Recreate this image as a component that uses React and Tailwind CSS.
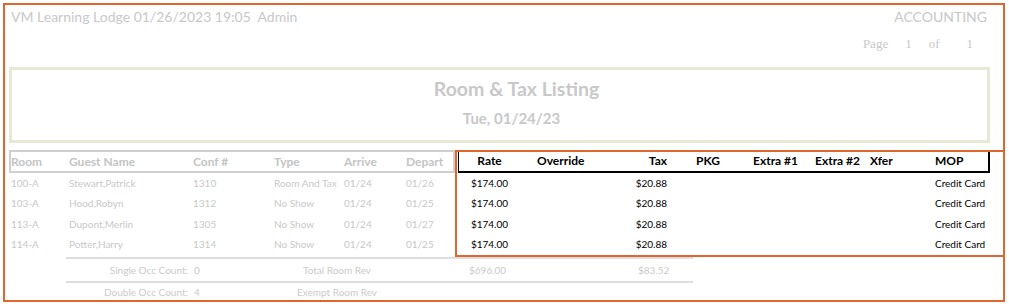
import React from "react";

const F = { fontFamily: "Lato, 'Open Sans', sans-serif" };

const rows = [
  ["100-A", "Stewart,Patrick", "1310", "Room And Tax", "01/24", "01/26"],
  ["103-A", "Hood,Robyn", "1312", "No Show", "01/24", "01/25"],
  ["113-A", "Dupont,Merlin", "1305", "No Show", "01/24", "01/27"],
  ["114-A", "Potter,Harry", "1314", "No Show", "01/24", "01/25"],
];

function LeftCols({ c }) {
  return (
    <>
      <div className="w-[58px] shrink-0">{c[0]}</div>
      <div className="w-[124px] shrink-0">{c[1]}</div>
      <div className="w-[81px] shrink-0">{c[2]}</div>
      <div className="w-[70px] shrink-0">{c[3]}</div>
      <div className="w-[62px] shrink-0">{c[4]}</div>
      <div className="flex-1">{c[5]}</div>
    </>
  );
}

function RightCols({ c }) {
  return (
    <>
      <div className="w-[61px] shrink-0 text-center">{c[0]}</div>
      <div className="w-[90px] shrink-0 pl-[17px]">{c[1]}</div>
      <div className="w-[62px] shrink-0 text-right pr-[5px]">{c[2]}</div>
      <div className="w-[79px] shrink-0 pl-[24px]">{c[3]}</div>
      <div className="w-[62px] shrink-0 pl-[2px]">{c[4]}</div>
      <div className="w-[55px] shrink-0 pl-[2px]">{c[5]}</div>
      <div className="w-[65px] shrink-0 pl-[2px]">{c[6]}</div>
      <div className="flex-1 pl-[2px]">{c[7]}</div>
    </>
  );
}

export default function App() {
  return (
    <div className="w-[1009px] h-[306px] bg-white overflow-hidden" style={F}>
      <div className="relative ml-[3px] mt-[3px] w-[1002px] h-[299px] border-2 border-[#e0662f] overflow-hidden">
        {/* top line */}
        <div className="flex items-center justify-between h-[22px] pl-[6px] pr-[16px] text-[14px] text-[#c8c8c8]">
          <span>VM Learning Lodge 01/26/2023 19:05&nbsp;&nbsp;Admin</span>
          <span>ACCOUNTING</span>
        </div>
        {/* page */}
        <div
          className="flex items-center justify-end h-[34px] pr-[30px] text-[13px] text-[#c8c8c8]"
          style={{ fontFamily: "'Liberation Serif', serif" }}
        >
          <span>Page</span>
          <span className="ml-[17px]">1</span>
          <span className="ml-[17px]">of</span>
          <span className="ml-[27px]">1</span>
        </div>
        {/* title box */}
        <div className="ml-[4px] mt-[6px] w-[981px] h-[76px] border-[3px] border-[#e8e8d6] flex flex-col items-center text-[#c8c8c8] font-bold">
          <div className="mt-[7px] pl-[34px] text-[19.5px] leading-[24px]">Room &amp; Tax Listing</div>
          <div className="mt-[7px] pl-[24px] text-[15px] leading-[20px]">Tue, 01/24/23</div>
        </div>
        {/* header */}
        <div className="flex ml-[4px] mt-[7px] h-[23px]">
          <div className="w-[446px] shrink-0 border-2 border-[#cfcfcf] flex items-center text-[12px] font-bold text-[#c4c4c4]">
            <LeftCols c={["Room", "Guest Name", "Conf #", "Type", "Arrive", "Depart"]} />
          </div>
          <div className="ml-[3px] w-[532px] shrink-0 border-l border-t border-r-2 border-b-2 border-black flex items-center text-[12px] font-bold text-black">
            <RightCols c={["Rate", "Override", "Tax", "PKG", "Extra #1", "Extra #2", "Xfer", "MOP"]} />
          </div>
        </div>
        {/* rows */}
        {rows.map((r, i) => (
          <div key={i} className="flex ml-[4px] h-[20.5px] text-[10px]">
            <div className="w-[446px] shrink-0 px-[2px] flex items-center text-[#c8c8c8]">
              <LeftCols c={r} />
            </div>
            <div className="ml-[3px] w-[532px] shrink-0 pl-[1px] flex items-center text-black">
              <RightCols c={["$174.00", "", "$20.88", "", "", "", "", "Credit Card"]} />
            </div>
          </div>
        ))}
        {/* footer */}
        <div className="ml-[61px] mt-[2px] w-[627px] text-[10px] text-[#cacaca]">
          <div className="flex items-center h-[24px] border-t-2 border-[#dedede]">
            <div className="w-[122px] shrink-0 text-right">Single Occ Count:</div>
            <div className="w-[42px] shrink-0 pl-[6px]">0</div>
            <div className="w-[214px] shrink-0 text-center">Total Room Rev</div>
            <div className="w-[192px] shrink-0 pl-[25px]">$696.00</div>
            <div className="flex-1 pl-[2px]">$83.52</div>
          </div>
          <div className="flex items-center h-[20px] border-t-2 border-[#dedede]">
            <div className="w-[122px] shrink-0 text-right">Double Occ Count:</div>
            <div className="w-[42px] shrink-0 pl-[6px]">4</div>
            <div className="w-[214px] shrink-0 text-center">Exempt Room Rev</div>
          </div>
        </div>
        {/* highlight overlay */}
        <div className="absolute left-[450px] top-[145px] w-[550px] h-[107px] border-2 border-[#e0662f] pointer-events-none" />
      </div>
    </div>
  );
}
